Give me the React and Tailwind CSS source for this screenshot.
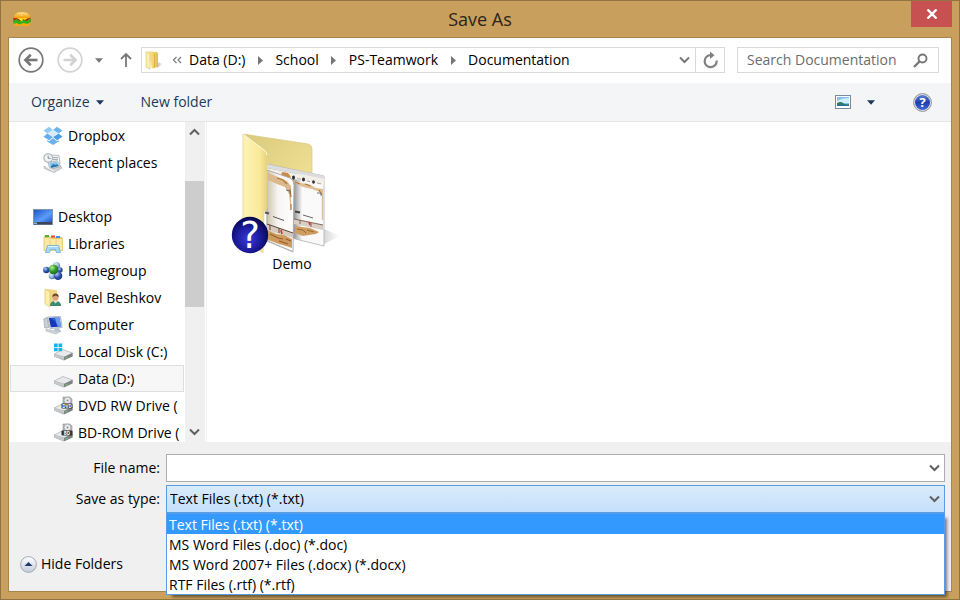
import React from "react";

function BurgerIcon() {
  return (
    <svg width="18" height="16" viewBox="0 0 18 16" aria-hidden="true">
      <defs>
        <linearGradient id="bun" x1="0" y1="0" x2="0" y2="1">
          <stop offset="0" stopColor="#ffd874" />
          <stop offset="1" stopColor="#f39a08" />
        </linearGradient>
      </defs>
      <path d="M1 11h16v1.500q0 2.500-3 2.500H4q-3 0-3-2.500z" fill="#f7a813" />
      <path d="M.5 6.500h17v4.500H.5z" fill="#b3200c" />
      <path d="M.5 9.500l3-1.500 3 2 4-1 3 1 4-3v4l-3 2-4-1-4 1.500-3-1.500-3 1z" fill="#2fb51c" />
      <path d="M4 7h11l-3 2-2-1-1 2.500z" fill="#ffe11f" />
      <path d="M1 6.500Q1 1 9 1t8 5.500q0 .8-1 .8H2q-1 0-1-.8z" fill="url(#bun)" />
      <path d="M6 3h1M9 2.500h1M12 3.500h1M8 4.500h1" stroke="#fff2c4" strokeWidth=".8" />
    </svg>
  );
}

function RoundArrow({ flip, color }) {
  return (
    <svg width="26" height="26" viewBox="0 0 26 26" fill="none" stroke={color} aria-hidden="true">
      <circle cx="13" cy="13" r="11.800" strokeWidth="1.700" />
      <g transform={flip ? "translate(26 0) scale(-1 1)" : undefined}>
        <path d="M7.500 13H19.500" strokeWidth="2.600" />
        <path d="M12.800 7.700L7.400 13l5.400 5.300" strokeWidth="2.600" />
      </g>
    </svg>
  );
}

function DownCaret({ color }) {
  return (
    <svg width="8" height="5" viewBox="0 0 8 5" aria-hidden="true">
      <path d="M0 .3h8L4 4.700z" fill={color} />
    </svg>
  );
}

function Chevron({ up, color = "#606060" }) {
  return (
    <svg width="11" height="8" viewBox="0 0 11 8" fill="none" aria-hidden="true">
      <path d={up ? "M1 6.500l4.500-4.500L10 6.500" : "M1 1.500L5.500 6 10 1.500"} stroke={color} strokeWidth="2" />
    </svg>
  );
}

function SmallFolder() {
  return (
    <svg width="20" height="20" viewBox="0 0 20 20" aria-hidden="true">
      <defs>
        <linearGradient id="sf" x1="0" y1="0" x2="1" y2="0">
          <stop offset="0" stopColor="#f8e9a0" />
          <stop offset="1" stopColor="#e3bf4a" />
        </linearGradient>
        <linearGradient id="sfShadow" x1="0" y1="0" x2="1" y2="0">
          <stop offset="0" stopColor="#bbb" />
          <stop offset="1" stopColor="#fff" />
        </linearGradient>
      </defs>
      <path d="M13 12l6 2-6 4z" fill="url(#sfShadow)" />
      <path d="M4 1l8 1q2 0 2 2v13l-6 1z" fill="url(#sf)" />
      <path d="M2 1.500l4 2.500v15l-4-2z" fill="#fbefae" stroke="#e0c463" strokeWidth=".6" />
      <path d="M8.500 3l2 1v14l-3 .5z" fill="#f3d775" />
      <path d="M10.500 4v14" stroke="#d0a93a" strokeWidth=".8" />
    </svg>
  );
}

function DropboxIcon() {
  return (
    <svg width="20" height="20" viewBox="0 0 20 20" aria-hidden="true">
      <path d="M6 .8L10 4 4.300 7.600.5 4.600z" fill="#8fcbf6" />
      <path d="M14 .8L10 4l5.700 3.600 3.800-3z" fill="#6cb4ee" />
      <path d="M4.300 7.600L10 11l-4 3.300-5.500-3.600z" fill="#62aeee" />
      <path d="M15.700 7.600L10 11l4 3.300 5.500-3.600z" fill="#4b9ce6" />
      <path d="M10 4l5.700 3.600L10 11 4.300 7.600z" fill="#d6ecfc" />
      <path d="M10 12l-4 3.200-1.800-1.100v1.400L10 19l5.800-3.500v-1.400L14 15.200z" fill="#6db4ee" />
    </svg>
  );
}

function RecentIcon() {
  return (
    <svg width="20" height="20" viewBox="0 0 20 20" aria-hidden="true">
      <path d="M8 2l8 .5 1 8-9 1z" fill="#f0f2f3" stroke="#aab0b4" strokeWidth=".8" />
      <path d="M10 4.500l5 .3M10 6.500l5 .3" stroke="#a0a6aa" />
      <circle cx="5.200" cy="5" r="4.300" fill="#eef3f4" stroke="#a9b2b6" strokeWidth="1.100" />
      <path d="M5.200 2.500V5.300h2.300" fill="none" stroke="#7c878d" strokeWidth=".9" />
      <path d="M5 9.500l9-1.500 4 5.500-11 3z" fill="#d5e4ec" stroke="#9aa7af" strokeWidth=".7" />
      <path d="M6.500 10.300l7-1.200 2.700 3.700-8.200 2z" fill="#7dc5ee" />
      <path d="M7.500 13.500l3-2.500 1.500 1 2-.8 2 1.800-8 1.900z" fill="#2b78a8" />
      <path d="M1 13l6 3.500 11-3 1 1.500-8 4.500-9.500-4z" fill="#d3d6d8" stroke="#9fa4a8" strokeWidth=".6" />
      <path d="M3 14l8 4" stroke="#f7f8f8" />
    </svg>
  );
}

function DesktopIcon() {
  return (
    <svg width="20" height="20" viewBox="0 0 20 20" aria-hidden="true">
      <defs>
        <linearGradient id="dt" x1="0" y1="0" x2="1" y2="1">
          <stop offset="0" stopColor="#1d54c4" />
          <stop offset=".6" stopColor="#5b9dfa" />
          <stop offset="1" stopColor="#2459c9" />
        </linearGradient>
      </defs>
      <path d="M0 2h20v16H0z" fill="#8196ad" />
      <path d="M1 3h18v12H1z" fill="url(#dt)" />
      <path d="M1 15h18v2.500H1z" fill="#3a4757" />
      <path d="M1 15.500h3v1.500H1z" fill="#8fb4d6" />
    </svg>
  );
}

function LibrariesIcon() {
  return (
    <svg width="20" height="20" viewBox="0 0 20 20" aria-hidden="true">
      <path d="M1 2h5l1 1h12v12H1z" fill="#e7c765" />
      <path d="M2 1h4v2H2z" fill="#57a83d" />
      <path d="M8 1.500h4v2H8z" fill="#dd4b3d" />
      <path d="M13 2h4v2h-4z" fill="#4a90d9" />
      <path d="M1 3.500h6l1 1h11.500v12H1z" fill="#fbe9a3" stroke="#ddbd5b" strokeWidth=".7" />
      <path d="M7 5v8M13 5v8" stroke="#ead07c" />
      <path d="M4.500 11.500h11l2 7h-4l-1-3h-5l-1 3h-4z" fill="#a5d9f3" stroke="#68add3" strokeWidth=".8" />
      <path d="M5 12.500h10" stroke="#e2f5fd" />
    </svg>
  );
}

function HomegroupIcon() {
  return (
    <svg width="20" height="20" viewBox="0 0 20 20" aria-hidden="true">
      <defs>
        <radialGradient id="hb" cx=".35" cy=".3" r=".8">
          <stop offset="0" stopColor="#b4cdf5" />
          <stop offset=".5" stopColor="#3158b4" />
          <stop offset="1" stopColor="#152c78" />
        </radialGradient>
        <radialGradient id="hg" cx=".35" cy=".3" r=".8">
          <stop offset="0" stopColor="#b8f08e" />
          <stop offset=".5" stopColor="#2f9c2b" />
          <stop offset="1" stopColor="#12601a" />
        </radialGradient>
        <radialGradient id="hc" cx=".4" cy=".3" r=".8">
          <stop offset="0" stopColor="#e2eefb" />
          <stop offset=".6" stopColor="#7ea3cf" />
          <stop offset="1" stopColor="#3e639c" />
        </radialGradient>
      </defs>
      <circle cx="13.500" cy="4.500" r="3.600" fill="url(#hc)" />
      <circle cx="3.300" cy="9" r="3.200" fill="url(#hb)" />
      <circle cx="17" cy="9" r="2.700" fill="url(#hb)" />
      <circle cx="9" cy="15" r="3.300" fill="url(#hc)" />
      <circle cx="15" cy="14.700" r="4.300" fill="url(#hb)" />
      <circle cx="10.500" cy="8.500" r="4.800" fill="url(#hg)" />
    </svg>
  );
}

function UserIcon() {
  return (
    <svg width="20" height="20" viewBox="0 0 20 20" aria-hidden="true">
      <path d="M4 1l9 1q1 0 1 1v14H4z" fill="#efd883" />
      <path d="M2 1l5 3v15l-5-3z" fill="#fbefae" stroke="#dfc266" strokeWidth=".7" />
      <path d="M7 18q0-5 5.500-5t5.500 5z" fill="#3d8a74" />
      <path d="M11 13.500l1.500 2 2-2v-2H11z" fill="#f4ddc8" />
      <circle cx="12.500" cy="9.500" r="3.100" fill="#d9a480" />
      <path d="M9.300 9q0-3.500 3.200-3.500T15.700 9q-2-1.500-3-1.500T9.300 9z" fill="#6b4226" />
    </svg>
  );
}

function ComputerIcon() {
  return (
    <svg width="20" height="20" viewBox="0 0 20 20" aria-hidden="true">
      <path d="M.8 4l3-1.500 2 10-4 .5z" fill="#c9d2da" stroke="#98a3af" strokeWidth=".7" />
      <path d="M4.500 2l13-.5 1.700 11-12 1z" fill="#dfe5ec" stroke="#93a0b0" strokeWidth=".7" />
      <path d="M5.800 3l10.700-.4 1.400 8.800-10 .8z" fill="#1637b6" />
      <path d="M11 2.800l5.500-.2 1.400 8.800-3 .2z" fill="#6d9ef2" />
      <path d="M8 3l4-.2 1.500 5z" fill="#2f5fd6" />
      <path d="M11 13.500l5-.5 1.500 3-6 .5z" fill="#b9c2cc" />
      <path d="M3 14l10 2.500 5-.5-5 3-10-3z" fill="#d5dae0" stroke="#a2acb7" strokeWidth=".6" />
    </svg>
  );
}

function DriveIcon({ kind }) {
  const disc = kind === "DVD" || kind === "BD";
  return (
    <svg width="20" height="20" viewBox="0 0 20 20" aria-hidden="true">
      {disc && (
        <g>
          <path d="M10 1h7l2 2v8h-9z" fill="#b9bbbd" stroke="#8c8e90" strokeWidth=".6" />
          <circle cx="14.500" cy="4.500" r="3.400" fill="#e8eaec" stroke="#9a9c9e" strokeWidth=".7" />
          <circle cx="14.500" cy="4.500" r="1" fill="#8c8e90" />
        </g>
      )}
      <path d="M1 12l9-4.500 9.500 3.500v3.500L11 18.500 1 14.500z" fill="#969a9d" />
      <path d="M1 12l9-4.500 9.500 3.500-8.500 4z" fill="#e7e9ea" stroke="#a9adb0" strokeWidth=".5" />
      <path d="M11 15l8.500-4v3.300L11 18z" fill="#7d8285" />
      <path d="M1 12l10 3v3L1 14.500z" fill="#c5c9cb" />
      <path d="M12.500 16l2-1" stroke="#65d36c" />
      {disc && (
        <g>
          <rect x="8.500" y="7.500" width="11" height="5" rx="1" fill="#333" />
          <text x="14" y="11.700" textAnchor="middle" fontSize="4.500" fontWeight="700" fill="#fff">
            {kind}
          </text>
        </g>
      )}
      {kind === "C" && (
        <path d="M1 1.500h3.700v3.500H1zM5.500 1.500h3.700v3.500H5.500zM1 5.800h3.700v3.400H1zM5.500 5.800h3.700v3.400H5.500z" fill="#12b4ee" />
      )}
    </svg>
  );
}

function DemoFolder() {
  return (
    <svg width="128" height="124" viewBox="228 130 128 124" className="block" aria-hidden="true">
      <defs>
        <linearGradient id="back" x1="0" y1="0" x2="1" y2="1">
          <stop offset="0" stopColor="#d9c97c" />
          <stop offset="1" stopColor="#f6e79c" />
        </linearGradient>
        <linearGradient id="flap" x1="0" y1="0" x2="1" y2="0">
          <stop offset="0" stopColor="#fdf3b6" />
          <stop offset=".7" stopColor="#fae999" />
          <stop offset="1" stopColor="#e6d27c" />
        </linearGradient>
        <linearGradient id="page" x1="0" y1="0" x2="1" y2="0">
          <stop offset="0" stopColor="#cfc4ae" />
          <stop offset=".4" stopColor="#f7f5f2" />
          <stop offset="1" stopColor="#fff" />
        </linearGradient>
        <linearGradient id="page2" x1="0" y1="0" x2="1" y2="0">
          <stop offset=".46" stopColor="#8e8e8e" />
          <stop offset=".62" stopColor="#fafafa" />
        </linearGradient>
        <linearGradient id="shade" x1="0" y1="0" x2="1" y2="0">
          <stop offset="0" stopColor="#d8d8d8" />
          <stop offset="1" stopColor="#fff" />
        </linearGradient>
        <radialGradient id="ball" cx=".45" cy=".6" r=".6">
          <stop offset="0" stopColor="#3a3ad8" />
          <stop offset=".55" stopColor="#1c1c9c" />
          <stop offset="1" stopColor="#060650" />
        </radialGradient>
      </defs>
      <path d="M324 229l16 7-16 8z" fill="url(#shade)" />
      <path d="M243 134l65 10q4 1 4 5v28l-56 40z" fill="url(#back)" stroke="#d8c878" strokeWidth=".7" />
      <path d="M267 164l57 12v70l-57-14z" fill="url(#page2)" stroke="#b0b0b0" strokeWidth=".8" />
      <path d="M267 164l57 12v3l-57-11z" fill="#dcdcdc" />
      <path d="M267 168l57 11v6l-57-11z" fill="#f2eee8" />
      <path d="M282 172l6 1 3 4-3 2-7-3z" fill="#c98a48" />
      <path d="M293 180l7 3 8 1 8 4 7 1v8l-3-5-8-3-9-2-8-4z" fill="#e0bd93" />
      <path d="M295 182l5 2M305 184l6 2M319 190l3 5" stroke="#b27c40" strokeWidth="1.200" fill="none" />
      <ellipse cx="293.500" cy="177.500" rx="1.500" ry="2" fill="#2f2f2f" />
      <ellipse cx="303.500" cy="179.500" rx="1.500" ry="1.900" fill="#2f2f2f" />
      <ellipse cx="313.500" cy="182" rx="1.400" ry="1.800" fill="#2f2f2f" />
      <path d="M297 178.500l4 .8M307 181l3 .6M317 183l4 .8" stroke="#999" strokeWidth=".8" />
      <path d="M317 193h4v3" fill="none" stroke="#666" strokeWidth=".9" />
      <path d="M322.500 194v26" stroke="#ddc09b" strokeWidth="1.400" />
      <path d="M295 211.500l5 1" stroke="#444" strokeWidth="1.800" />
      <path d="M303 215l10 3" stroke="#666" />
      <path d="M294 219l29 6v5l-29-6z" fill="#d9cec4" />
      <path d="M294 219l29 6M300 220v4M311 223v4" stroke="#7a5a45" strokeWidth=".9" />
      <path d="M309 222l1 3" stroke="#c53030" strokeWidth="1.400" />
      <path d="M295 226l7 1 8 1 9 4-3 2-7 1-6 1-8-3z" fill="#cf9c62" />
      <path d="M297 229l6 1 3 3M307 230l7 2" stroke="#9a6430" fill="none" />
      <path d="M267 170l23 8q4 2 4 7l-1 67-26-11z" fill="url(#page)" stroke="#a8a8a8" strokeWidth=".9" />
      <path d="M268 173l10 4 9 4 4 5v26l-2-18-4-7-8-3-9-4z" fill="#dcb88d" />
      <path d="M277 178l6 2 4 4M290 189l1 8M291 204v6" stroke="#ae7638" strokeWidth="1.200" fill="none" />
      <path d="M286 190l4 1v3" fill="none" stroke="#666" strokeWidth=".9" />
      <path d="M265 212.500l4 1" stroke="#555" strokeWidth="2.200" />
      <path d="M273 216.500l11 4" stroke="#555" />
      <path d="M267 224l26 9v5l-26-8z" fill="#d6cabf" />
      <path d="M267 224l26 9M270 225v5M279 228v5" stroke="#5f4534" fill="none" />
      <path d="M281 230l1 4" stroke="#c53030" strokeWidth="1.600" />
      <path d="M267 230l9 4 8 1 8 4v9l-6-2-7-2-12-5z" fill="#cf9a5e" />
      <path d="M270 234l8 4 5 1M279 241l9 3M286 239l5 2" stroke="#93602c" fill="none" strokeWidth="1.200" />
      <path d="M267 241l26 10.500" stroke="#b9b9b9" />
      <path d="M243 134l21 16q3 2 3 5v53l-3 4-1 41-20-17z" fill="url(#flap)" stroke="#e6d688" strokeWidth=".8" />
      <path d="M243 134l21 16q3 2 3 5" fill="none" stroke="#fffbe0" />
      <circle cx="250" cy="235" r="18.200" fill="url(#ball)" />
      <text x="250" y="248" textAnchor="middle" fontSize="37" fill="#fff" fontFamily="'DejaVu Sans', sans-serif">
        ?
      </text>
    </svg>
  );
}

const places = [
  { label: "Dropbox", pad: "pl-[34px]", icon: <DropboxIcon /> },
  { label: "Recent places", pad: "pl-[34px]", icon: <RecentIcon /> },
  null,
  { label: "Desktop", pad: "pl-6", icon: <DesktopIcon /> },
  { label: "Libraries", pad: "pl-[34px]", icon: <LibrariesIcon /> },
  { label: "Homegroup", pad: "pl-[34px]", icon: <HomegroupIcon /> },
  { label: "Pavel Beshkov", pad: "pl-[34px]", icon: <UserIcon /> },
  { label: "Computer", pad: "pl-[34px]", icon: <ComputerIcon /> },
  { label: "Local Disk (C:)", pad: "pl-11", icon: <DriveIcon kind="C" /> },
  { label: "Data (D:)", pad: "pl-[42px]", icon: <DriveIcon />, selected: true },
  { label: "DVD RW Drive (", pad: "pl-11", icon: <DriveIcon kind="DVD" /> },
  { label: "BD-ROM Drive (", pad: "pl-11", icon: <DriveIcon kind="BD" /> },
];

const crumbs = ["Data (D:)", "School", "PS-Teamwork", "Documentation"];

const fileTypes = [
  "Text Files (.txt) (*.txt)",
  "MS Word Files (.doc) (*.doc)",
  "MS Word 2007+ Files (.docx) (*.docx)",
  "RTF Files (.rtf) (*.rtf)",
];

function TitleBar() {
  return (
    <header className="relative flex h-9 shrink-0 items-center justify-center">
      <span className="absolute left-3 top-[10px]">
        <BurgerIcon />
      </span>
      <h1 className="text-lg text-[#2b241b]">Save As</h1>
      <button
        type="button"
        aria-label="Close"
        className="absolute right-[7px] top-0 flex h-[26px] w-[41px] items-center justify-center bg-[#c75050]"
      >
        <svg width="12" height="10" viewBox="0 0 12 10" aria-hidden="true">
          <path d="M1.500 .5l9 9M10.500 .5l-9 9" stroke="#fff" strokeWidth="2.400" />
        </svg>
      </button>
    </header>
  );
}

function NavBar() {
  return (
    <nav className="flex h-[45px] shrink-0 items-center bg-white pb-px pl-[9px] pr-3">
      <button type="button" aria-label="Back">
        <RoundArrow color="#777" />
      </button>
      <button type="button" aria-label="Forward" className="ml-[13px]">
        <RoundArrow flip color="#d2d2d2" />
      </button>
      <button type="button" aria-label="Recent locations" className="ml-3">
        <DownCaret color="#777" />
      </button>
      <button type="button" aria-label="Up" className="ml-4">
        <svg width="14" height="16" viewBox="0 0 14 16" fill="none" stroke="#777" strokeWidth="1.800" aria-hidden="true">
          <path d="M7 1.500V15M2 7l5-5 5 5" />
        </svg>
      </button>
      <div className="ml-2 flex h-[26px] min-w-0 flex-1 items-stretch border border-[#d9d9d9]">
        <div className="flex min-w-0 flex-1 items-center pl-[2px]">
          <SmallFolder />
          <span className="flex w-[25px] items-center justify-center">
            <svg width="10" height="8" viewBox="0 0 10 8" fill="none" stroke="#777" strokeWidth="1.200" aria-hidden="true">
              <path d="M4.500 1l-3 3 3 3M9 1L6 4l3 3" />
            </svg>
          </span>
          {crumbs.map((name, i) => (
            <React.Fragment key={name}>
              {i > 0 && (
                <span className="flex w-[30px] justify-center">
                  <svg width="5" height="9" viewBox="0 0 5 9" aria-hidden="true">
                    <path d="M0 0l5 4.500L0 9z" fill="#777" />
                  </svg>
                </span>
              )}
              <button type="button" className="whitespace-nowrap text-black">
                {name}
              </button>
            </React.Fragment>
          ))}
        </div>
        <button type="button" aria-label="Previous locations" className="flex w-[22px] items-center justify-center">
          <Chevron color="#777" />
        </button>
        <button
          type="button"
          aria-label="Refresh"
          className="flex w-[29px] items-center justify-center border-l border-[#d9d9d9]"
        >
          <svg width="16" height="18" viewBox="0 0 16 18" fill="none" aria-hidden="true">
            <path d="M14.600 9.500A6 6 0 1 1 9 4.200" stroke="#808080" strokeWidth="2.200" />
            <path d="M8 .5l4.500 3.700L8 8z" fill="#808080" />
          </svg>
        </button>
      </div>
      <label className="ml-3 flex h-[26px] w-[202px] items-center border border-[#d9d9d9] pl-[9px] pr-[10px]">
        <input
          type="text"
          aria-label="Search Documentation"
          placeholder="Search Documentation"
          className="min-w-0 flex-1 bg-transparent outline-none placeholder:text-[#6d6d6d]"
        />
        <svg width="15" height="15" viewBox="0 0 15 15" fill="none" stroke="#777" aria-hidden="true">
          <circle cx="9.500" cy="5.500" r="4" strokeWidth="1.900" />
          <path d="M6.500 8.500L1 14" strokeWidth="2.400" />
        </svg>
      </label>
    </nav>
  );
}

function Toolbar() {
  return (
    <div className="flex h-[39px] shrink-0 items-center border-b border-[#e4e5e7] bg-[#f4f5f7] pl-[22px] pr-[19px] text-[#1e395b]">
      <button type="button" className="flex items-center gap-[6px]">
        Organize
        <DownCaret color="#1e395b" />
      </button>
      <button type="button" className="ml-[37px]">
        New folder
      </button>
      <button type="button" aria-label="Change view" className="ml-auto">
        <svg width="16" height="14" viewBox="0 0 16 14" aria-hidden="true">
          <rect x=".5" y=".5" width="15" height="13" fill="#fff" stroke="#7b8a9c" />
          <path d="M2 2h12v9H2z" fill="#7fc4f0" />
          <path d="M2 6q5-3 12-3v5H2z" fill="#d5eefb" />
          <path d="M2 8q4-2 6 0t6 1v2H2z" fill="#2d7a6b" />
          <path d="M2 10h12v1H2z" fill="#2a6ea8" />
        </svg>
      </button>
      <button type="button" aria-label="More views" className="ml-4">
        <DownCaret color="#1e395b" />
      </button>
      <button type="button" aria-label="Help" className="ml-[38px]">
        <svg width="19" height="19" viewBox="0 0 19 19" aria-hidden="true">
          <defs>
            <linearGradient id="help" x1="0" y1="0" x2="0" y2="1">
              <stop offset="0" stopColor="#5f7fd8" />
              <stop offset=".5" stopColor="#1e3eb0" />
              <stop offset="1" stopColor="#3f68d8" />
            </linearGradient>
          </defs>
          <circle cx="9.500" cy="9.500" r="8.900" fill="#e6e6e6" stroke="#8d8d8d" />
          <circle cx="9.500" cy="9.500" r="7.500" fill="url(#help)" />
          <text x="9.500" y="14" textAnchor="middle" fontSize="13" fontWeight="700" fill="#fff">
            ?
          </text>
        </svg>
      </button>
    </div>
  );
}

function Sidebar() {
  return (
    <aside className="flex w-[198px] shrink-0 border-r border-[#f0f0f0]">
      <ul className="w-44 shrink-0 overflow-hidden pr-px">
        {places.map((p, i) =>
          p ? (
            <li key={p.label} className={p.selected ? "pl-px" : ""}>
              <button
                type="button"
                className={`flex h-[27px] w-full items-center gap-[5px] overflow-hidden whitespace-nowrap text-black ${p.pad} ${
                  p.selected ? "border border-[#dedede] bg-[#f7f7f7]" : ""
                }`}
              >
                <span className="shrink-0">{p.icon}</span>
                {p.label}
              </button>
            </li>
          ) : (
            <li key={i} className="h-[27px]" />
          )
        )}
      </ul>
      <div className="flex w-5 flex-col bg-[#f0f0f0]">
        <button type="button" aria-label="Scroll up" className="flex h-5 w-[19px] items-center justify-center">
          <Chevron up />
        </button>
        <div className="flex-1 pt-[39px]">
          <div className="h-[126px] w-[19px] bg-[#cdcdcd]" />
        </div>
        <button type="button" aria-label="Scroll down" className="flex h-5 w-[19px] items-center justify-center">
          <Chevron />
        </button>
      </div>
    </aside>
  );
}

function Footer() {
  return (
    <form className="flex h-[149px] shrink-0 flex-col bg-[#f0f0f0] pl-[11px] pr-[6px] pt-3">
      <div className="flex h-7 items-center">
        <label htmlFor="file-name" className="w-[146px] pr-[6px] text-right">
          File name:
        </label>
        <div className="flex h-7 flex-1 border border-[#abadb3] bg-white">
          <input id="file-name" type="text" className="min-w-0 flex-1 px-1 outline-none" />
          <button type="button" aria-label="Previous names" className="flex w-5 items-center justify-center">
            <Chevron />
          </button>
        </div>
      </div>
      <div className="mt-[3px] flex h-7 items-center">
        <label htmlFor="file-type" className="w-[146px] pr-[6px] text-right">
          Save as type:
        </label>
        <div className="relative h-7 flex-1">
          <select
            id="file-type"
            className="block h-full w-full appearance-none border border-[#569de5] bg-linear-to-b from-[#daebfb] to-[#c4e0fb] px-[3px] outline-none"
          >
            {fileTypes.map((t) => (
              <option key={t}>{t}</option>
            ))}
          </select>
          <span className="pointer-events-none absolute right-[5px] top-[10px]">
            <Chevron />
          </span>
          <ul
            role="listbox"
            aria-label="Save as type"
            className="absolute inset-x-0 top-[27px] border border-t-2 border-[#569de5] bg-white shadow-[4px_4px_3px_-2px_rgba(0,0,0,0.5)]"
          >
            {fileTypes.map((t, i) => (
              <li
                key={t}
                role="option"
                aria-selected={i === 0}
                className={`h-5 px-[2px] leading-[21px] ${i === 0 ? "bg-[#3399ff] text-white" : ""}`}
              >
                {t}
              </li>
            ))}
          </ul>
        </div>
      </div>
      <button type="button" className="mb-[17px] mt-auto flex items-center gap-1 self-start">
        <svg width="17" height="17" viewBox="0 0 17 17" aria-hidden="true">
          <defs>
            <linearGradient id="hide" x1="0" y1="0" x2="0" y2="1">
              <stop offset="0" stopColor="#fff" />
              <stop offset="1" stopColor="#c3cbd9" />
            </linearGradient>
          </defs>
          <circle cx="8.500" cy="8.500" r="7.900" fill="url(#hide)" stroke="#9fa8b8" />
          <path d="M4.500 10h8l-4-4z" fill="#1e3a6b" />
        </svg>
        Hide Folders
      </button>
    </form>
  );
}

export default function App() {
  return (
    <div className="flex h-screen w-full flex-col overflow-hidden border border-[#93733f] bg-[#c89f5d] font-['Open_Sans','Noto_Sans',sans-serif] text-sm text-black">
      <TitleBar />
      <div className="mx-[7px] mb-[7px] flex min-h-0 flex-1 flex-col border border-[#a8854b]">
        <NavBar />
        <Toolbar />
        <div className="flex min-h-0 flex-1 bg-white">
          <Sidebar />
          <main className="min-w-0 flex-1 pl-[21px] pt-2">
            <button type="button" className="flex w-32 flex-col items-center">
              <DemoFolder />
              Demo
            </button>
          </main>
        </div>
        <Footer />
      </div>
    </div>
  );
}
